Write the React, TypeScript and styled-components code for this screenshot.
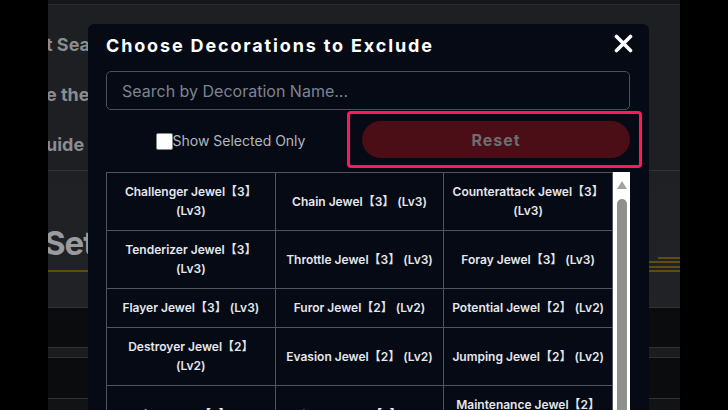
import React from "react";
import styled, { createGlobalStyle } from "styled-components";

const GlobalStyle = createGlobalStyle`
  html, body { margin: 0; padding: 0; background: #000; }
  body { font-family: Inter, "Noto Sans", sans-serif; }
  * { box-sizing: border-box; }
`;

const FONT = `Inter, "Noto Sans CJK JP", "Noto Sans", sans-serif`;

const Screen = styled.div`
  width: 728px;
  height: 410px;
  overflow: hidden;
  background: #000;
  display: flex;
  justify-content: center;
`;

const Page = styled.div`
  position: relative;
  width: 632px;
  height: 410px;
  overflow: hidden;
  background: #0b0c0e;
  display: flex;
  flex-direction: column;
  font-family: ${FONT};
`;

const TopStrip = styled.div`
  height: 5px;
  flex: none;
  background: #151618;
  border-bottom: 1px solid #2a2b2e;
`;

const Hero = styled.div`
  height: 166px;
  flex: none;
  padding-top: 15px;
  background: #1d1f22;
  border-bottom: 1px solid #323438;
`;

const HeroLine = styled.div`
  height: 50px;
  line-height: 50px;
  font-size: 18px;
  font-weight: 700;
  color: #8b8c8f;
  white-space: nowrap;
  text-indent: -2px;
`;

const SetSection = styled.div`
  height: 127px;
  flex: none;
  padding-top: 52px;
  background: linear-gradient(#1e2023, #202225);
`;

const SetRow = styled.div`
  display: flex;
  justify-content: space-between;
  align-items: flex-end;
`;

const SetTitle = styled.div`
  font-size: 33px;
  line-height: 40px;
  font-weight: 700;
  letter-spacing: -1px;
  color: #9a9b9d;
  white-space: nowrap;
  text-indent: -4px;
  padding-bottom: 7px;
  border-bottom: 2px solid #5f4e0a;
`;

const Stripes = styled.div`
  display: flex;
  flex-direction: column;
  align-items: flex-end;
  gap: 2.5px;
`;

const Stripe = styled.div<{ $w: number }>`
  width: ${(p) => p.$w}px;
  height: 2px;
  background: #5e4d0c;
`;

const Band = styled.div<{ $h: number; $bg: string }>`
  height: ${(p) => p.$h}px;
  flex: none;
  background: ${(p) => p.$bg};
  border-bottom: 1px solid #303135;
`;

const Modal = styled.div`
  position: absolute;
  top: 24px;
  left: 40px;
  width: 561px;
  height: 430px;
  background: #050a14;
  border-radius: 6px;
  padding: 10px 19px 0 18px;
  display: flex;
  flex-direction: column;
`;

const Header = styled.div`
  display: flex;
  justify-content: space-between;
  align-items: flex-start;
  height: 24px;
`;

const Title = styled.h2`
  margin: 0;
  font-size: 18px;
  line-height: 24px;
  font-weight: 700;
  letter-spacing: 1.85px;
  color: #ffffff;
`;

const CloseButton = styled.button`
  width: 22px;
  height: 20px;
  margin-right: -4px;
  padding: 0;
  border: none;
  background: none;
  display: flex;
  align-items: center;
  justify-content: center;
  cursor: pointer;
`;

const Search = styled.input`
  margin-top: 13px;
  height: 39px;
  width: 100%;
  border: 1px solid #4a4f5d;
  border-radius: 5px;
  background: transparent;
  padding: 0 15px;
  font-family: ${FONT};
  font-size: 16px;
  color: #fff;
  outline: none;
  &::placeholder {
    color: #7d8392;
  }
`;

const Controls = styled.div`
  margin-top: 11px;
  height: 37px;
  display: grid;
  grid-template-columns: 1fr 268px;
  align-items: center;
`;

const CheckLabel = styled.label`
  display: flex;
  align-items: flex-end;
  justify-content: center;
  padding-right: 7px;
  padding-top: 2px;
  font-size: 14px;
  line-height: 14px;
  color: #b3b7bf;
`;

const Box = styled.input`
  appearance: none;
  width: 17px;
  height: 17px;
  margin: 0 0 -2px 0;
  background: #fff;
  border: 1px solid #858585;
  border-radius: 2px;
`;

const ResetWrap = styled.div`
  position: relative;
  height: 37px;
  &::after {
    content: "";
    position: absolute;
    top: -10px;
    bottom: -10px;
    left: -15px;
    right: -12px;
    border: 3px solid #ff1760;
    border-radius: 4px;
    pointer-events: none;
  }
`;

const ResetButton = styled.button`
  width: 100%;
  height: 37px;
  border: none;
  border-radius: 19px;
  background: #4b0e16;
  color: #6e6d71;
  font-family: ${FONT};
  font-size: 16px;
  font-weight: 700;
  letter-spacing: 1px;
`;

const TableArea = styled.div`
  margin-top: 14px;
  height: 250px;
  display: flex;
`;

const TableWrap = styled.div`
  flex: 1;
  overflow: hidden;
`;

const Table = styled.table`
  width: 507px;
  border-collapse: collapse;
  table-layout: fixed;
`;

const Cell = styled.td`
  border: 1px solid #4f545e;
  padding: 9px 6px 10px;
  line-height: 19px;
  text-align: center;
  vertical-align: middle;
  font-size: 12px;
  font-weight: 600;
  color: #e4e7ed;
`;

const Track = styled.div`
  width: 17px;
  background: #ffffff;
  display: flex;
  flex-direction: column;
  align-items: center;
  padding-top: 9px;
`;

const Arrow = styled.div`
  width: 0;
  height: 0;
  border-left: 5px solid transparent;
  border-right: 5px solid transparent;
  border-bottom: 8px solid #a3a3a3;
`;

const Thumb = styled.div`
  margin-top: 10px;
  width: 10px;
  height: 300px;
  border-radius: 5px;
  background: #8f8f8f;
`;

const rows: string[][] = [
  ["Challenger Jewel【3】 (Lv3)", "Chain Jewel【3】 (Lv3)", "Counterattack Jewel【3】 (Lv3)"],
  ["Tenderizer Jewel【3】 (Lv3)", "Throttle Jewel【3】 (Lv3)", "Foray Jewel【3】 (Lv3)"],
  ["Flayer Jewel【3】 (Lv3)", "Furor Jewel【2】 (Lv2)", "Potential Jewel【2】 (Lv2)"],
  ["Destroyer Jewel【2】 (Lv2)", "Evasion Jewel【2】 (Lv2)", "Jumping Jewel【2】 (Lv2)"],
  ["Footing Jewel【2】 (Lv2)", "Defense Jewel【2】 (Lv2)", "Maintenance Jewel【2】 (Lv2)"],
  ["Sheath Jewel【2】 (Lv2)", "Sprinter Jewel【2】 (Lv2)", "Grinder Jewel【2】 (Lv2)"],
];

const CloseIcon = () => (
  <svg width="21" height="20" viewBox="0 0 21 20">
    <path d="M3.5 2.5 L17.5 16.5 M17.5 2.5 L3.5 16.5" stroke="#fff" strokeWidth="3.6" strokeLinecap="round" />
  </svg>
);

export default function App() {
  return (
    <>
      <GlobalStyle />
      <Screen>
        <Page>
          <TopStrip />
          <Hero>
            <HeroLine>t Search for the best builds</HeroLine>
            <HeroLine>e the skill simulator</HeroLine>
            <HeroLine>uide</HeroLine>
          </Hero>
          <SetSection>
            <SetRow>
              <SetTitle>Set Search</SetTitle>
              <Stripes>
                <Stripe $w={22} />
                <Stripe $w={31} />
                <Stripe $w={31} />
                <Stripe $w={31} />
              </Stripes>
            </SetRow>
          </SetSection>
          <Band $h={10} $bg="#222326" />
          <Band $h={40} $bg="#0b0c0e" />
          <Band $h={10} $bg="#1b1c1e" />
          <Band $h={41} $bg="#0b0c0e" />
          <Band $h={20} $bg="#121315" />

          <Modal>
            <Header>
              <Title>Choose Decorations to Exclude</Title>
              <CloseButton aria-label="Close">
                <CloseIcon />
              </CloseButton>
            </Header>
            <Search placeholder="Search by Decoration Name..." />
            <Controls>
              <CheckLabel>
                <Box type="checkbox" />
                Show Selected Only
              </CheckLabel>
              <ResetWrap>
                <ResetButton>Reset</ResetButton>
              </ResetWrap>
            </Controls>
            <TableArea>
              <TableWrap>
                <Table>
                  <tbody>
                    {rows.map((r, i) => (
                      <tr key={i}>
                        {r.map((c) => (
                          <Cell key={c}>{c}</Cell>
                        ))}
                      </tr>
                    ))}
                  </tbody>
                </Table>
              </TableWrap>
              <Track>
                <Arrow />
                <Thumb />
              </Track>
            </TableArea>
          </Modal>
        </Page>
      </Screen>
    </>
  );
}
